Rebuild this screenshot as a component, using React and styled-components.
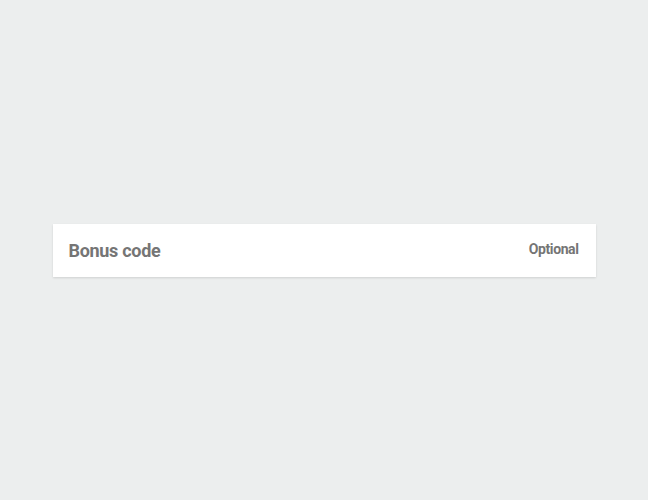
import React from "react";
import styled, { createGlobalStyle } from "styled-components";

const GlobalStyle = createGlobalStyle`
    html, body {
        margin: 0;
        padding: 0;
        background: #eceeee;
        font-family: Roboto, "Liberation Sans", Arial, sans-serif;
    }
`;

const Page = styled.div`
    display: flex;
    align-items: center;
    justify-content: center;
    height: 100vh;
`;

const Field = styled.label`
    display: flex;
    align-items: center;
    justify-content: space-between;
    box-sizing: border-box;
    width: 543px;
    height: 53px;
    padding: 0 17px 0 16px;
    background: #fff;
    box-shadow: 0 1px 2px rgba(0, 0, 0, 0.12);
    color: #757575;
    font-weight: 700;
`;

const Label = styled.span`
    font-size: 18px;
    letter-spacing: -0.3px;
`;

const Hint = styled.span`
    font-size: 14px;
    letter-spacing: -0.4px;
    margin-top: -3px;
`;

export default function App() {
    return (
        <>
            <GlobalStyle />
            <Page>
                <Field>
                    <Label>Bonus code</Label>
                    <Hint>Optional</Hint>
                </Field>
            </Page>
        </>
    );
}
